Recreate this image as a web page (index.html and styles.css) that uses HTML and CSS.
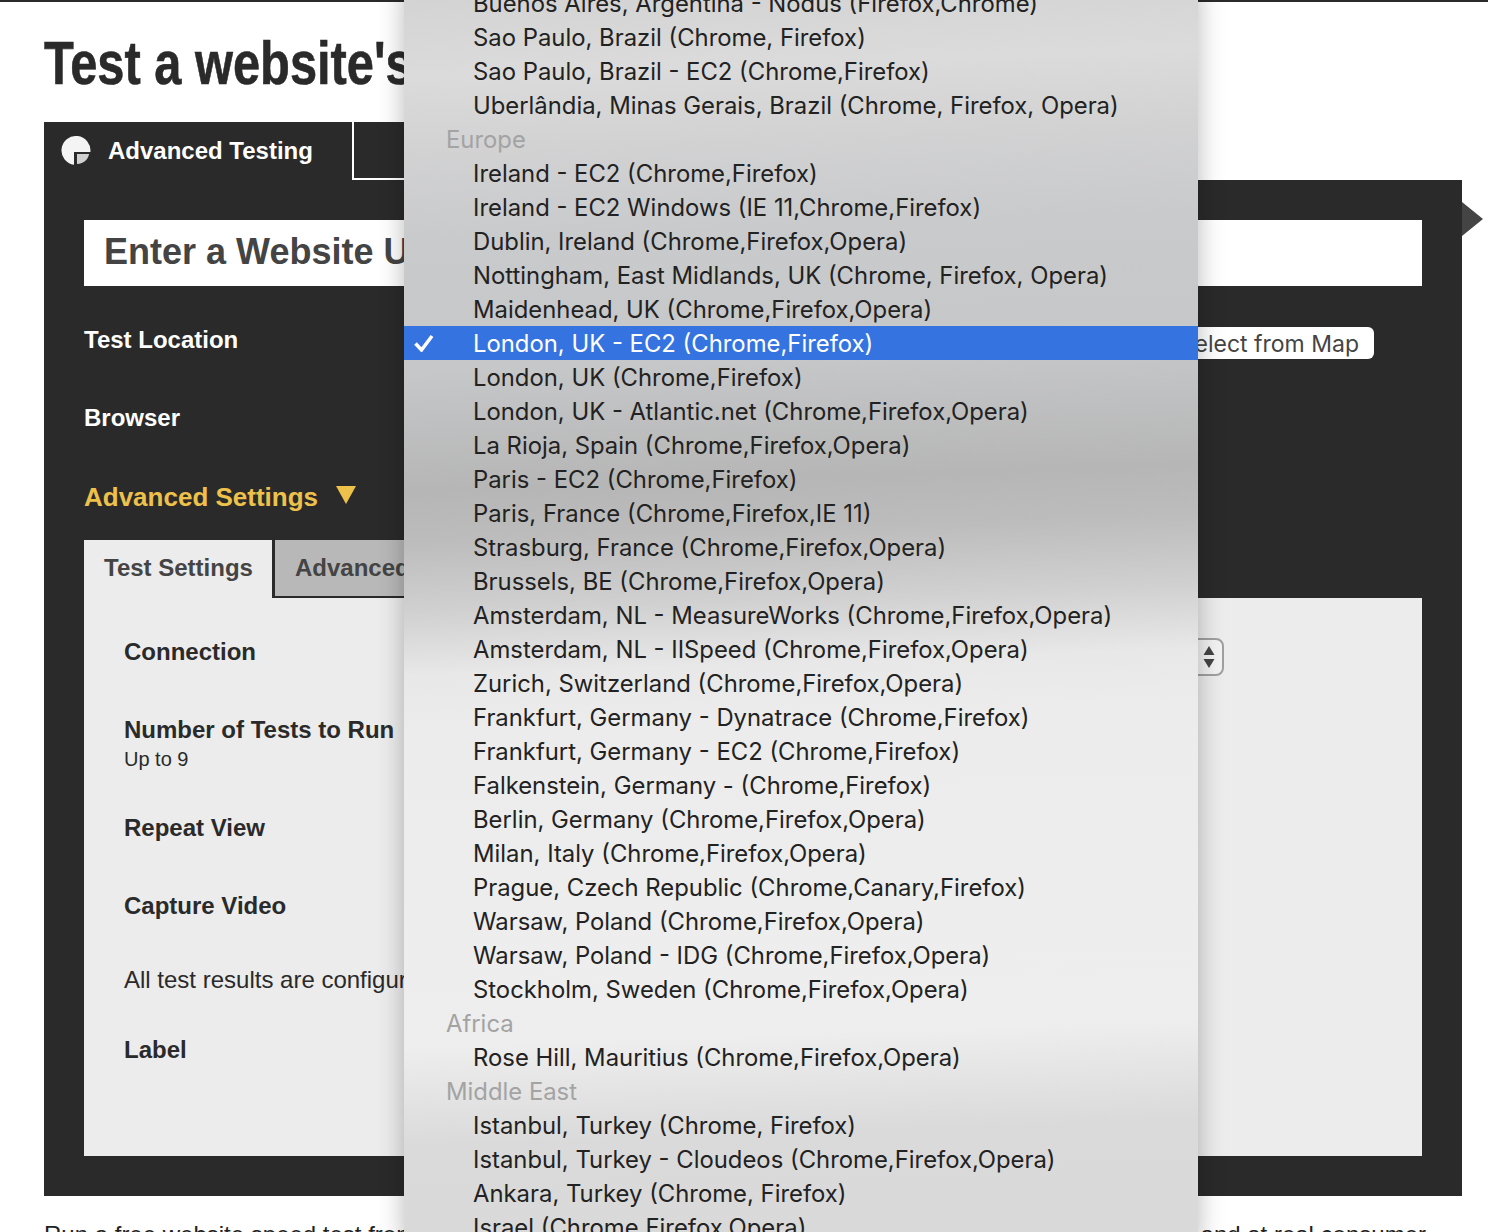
FILE: index.html
```html
<!DOCTYPE html>
<html lang="en">
<head>
  <meta charset="UTF-8" />
  <title>Test a website's performance</title>
  <link rel="stylesheet" href="styles.css">
</head>
<body>
  <main class="page">
    <h1>Test a website's performance</h1>

    <div class="tester">
      <div class="tabs">
        <div class="tab tab-active">
          <svg class="tab-icon" width="30" height="30" viewBox="0 0 30 30">
            <path d="M13 28.860A14.500 14.500 0 1 1 29.410 16H13z" fill="#f4f4f4"/>
            <path d="M16 18h12c-.5 5-5 9.500-12 10z" fill="#d0d0d0"/>
          </svg>
          Advanced Testing
        </div>
        <div class="tab tab-other">Simple Testing</div>
        <div class="tab-rest"></div>
      </div>

      <div class="panel">
        <div class="url-box">Enter a Website URL</div>

        <div class="field field-location">
          <span class="field-label">Test Location</span>
          <button class="map-btn" type="button">Select from Map</button>
        </div>
        <div class="field">
          <span class="field-label">Browser</span>
        </div>
        <div class="adv-toggle">
          Advanced Settings
          <svg width="20" height="18" viewBox="0 0 20 18"><path d="M0 0h20L10 18z" fill="#eec14a"/></svg>
        </div>

        <div class="sub-tabs">
          <div class="sub-tab sub-tab-active">Test Settings</div>
          <div class="sub-tab">Advanced</div>
        </div>
        <div class="settings">
          <div class="setting setting-connection">
            <span class="field-label">Connection</span>
            <div class="stepper">
              <svg width="12" height="22" viewBox="0 0 12 22">
                <path d="M6 0l5.500 9H.5zM.5 13h11L6 22z" fill="#444"/>
              </svg>
            </div>
          </div>
          <div class="setting setting-runs">
            <span class="field-label">Number of Tests to Run</span>
            <span class="field-hint">Up to 9</span>
          </div>
          <div class="setting"><span class="field-label">Repeat View</span></div>
          <div class="setting"><span class="field-label">Capture Video</span></div>
          <div class="setting setting-note">All test results are configured to be public</div>
          <div class="setting"><span class="field-label">Label</span></div>
        </div>
      </div>
      <div class="next-arrow"></div>
    </div>

    <p class="intro">
      <span>Run a free website speed test from</span>
      <span>and at real consumer</span>
    </p>
  </main>

  <ul class="menu">
    <li>Buenos Aires, Argentina - Nodus (Firefox,Chrome)</li>
    <li>Sao Paulo, Brazil (Chrome, Firefox)</li>
    <li>Sao Paulo, Brazil - EC2 (Chrome,Firefox)</li>
    <li>Uberlândia, Minas Gerais, Brazil (Chrome, Firefox, Opera)</li>
    <li class="menu-group">Europe</li>
    <li>Ireland - EC2 (Chrome,Firefox)</li>
    <li>Ireland - EC2 Windows (IE 11,Chrome,Firefox)</li>
    <li>Dublin, Ireland (Chrome,Firefox,Opera)</li>
    <li>Nottingham, East Midlands, UK (Chrome, Firefox, Opera)</li>
    <li>Maidenhead, UK (Chrome,Firefox,Opera)</li>
    <li class="menu-selected">
      <svg class="menu-check" width="20" height="18" viewBox="0 0 20 18">
        <path d="M1.500 9.500l6 6.500L18 2" fill="none" stroke="#fff" stroke-width="3.500"/>
      </svg>
      London, UK - EC2 (Chrome,Firefox)
    </li>
    <li>London, UK (Chrome,Firefox)</li>
    <li>London, UK - Atlantic.net (Chrome,Firefox,Opera)</li>
    <li>La Rioja, Spain (Chrome,Firefox,Opera)</li>
    <li>Paris - EC2 (Chrome,Firefox)</li>
    <li>Paris, France (Chrome,Firefox,IE 11)</li>
    <li>Strasburg, France (Chrome,Firefox,Opera)</li>
    <li>Brussels, BE (Chrome,Firefox,Opera)</li>
    <li>Amsterdam, NL - MeasureWorks (Chrome,Firefox,Opera)</li>
    <li>Amsterdam, NL - IISpeed (Chrome,Firefox,Opera)</li>
    <li>Zurich, Switzerland (Chrome,Firefox,Opera)</li>
    <li>Frankfurt, Germany - Dynatrace (Chrome,Firefox)</li>
    <li>Frankfurt, Germany - EC2 (Chrome,Firefox)</li>
    <li>Falkenstein, Germany - (Chrome,Firefox)</li>
    <li>Berlin, Germany (Chrome,Firefox,Opera)</li>
    <li>Milan, Italy (Chrome,Firefox,Opera)</li>
    <li>Prague, Czech Republic (Chrome,Canary,Firefox)</li>
    <li>Warsaw, Poland (Chrome,Firefox,Opera)</li>
    <li>Warsaw, Poland - IDG (Chrome,Firefox,Opera)</li>
    <li>Stockholm, Sweden (Chrome,Firefox,Opera)</li>
    <li class="menu-group">Africa</li>
    <li>Rose Hill, Mauritius (Chrome,Firefox,Opera)</li>
    <li class="menu-group">Middle East</li>
    <li>Istanbul, Turkey (Chrome, Firefox)</li>
    <li>Istanbul, Turkey - Cloudeos (Chrome,Firefox,Opera)</li>
    <li>Ankara, Turkey (Chrome, Firefox)</li>
    <li>Israel (Chrome,Firefox,Opera)</li>
  </ul>
</body>
</html>
```

FILE: styles.css
```css
html, body {
  height: 1232px;
  overflow: hidden;
}
body {
  margin: 0;
  position: relative;
  background: white;
  color: #2a2a2a;
  font-family: "Liberation Sans", Arial, sans-serif;
}
.page {
  border-top: 2px solid #2a2a2a;
  padding: 0 26px 0 44px;
}
h1 {
  margin: 0;
  height: 120px;
  box-sizing: border-box;
  padding-top: 29px;
  font-size: 61px;
  line-height: 64px;
  color: #2a2a2a;
  white-space: nowrap;
  transform: scaleX(0.8);
  transform-origin: left;
  -webkit-text-stroke: 0.6px #2a2a2a;
}
.tester {
  position: relative;
}
.tabs {
  display: flex;
  height: 58px;
}
.tab {
  display: flex;
  align-items: center;
  box-sizing: border-box;
  color: white;
  font-size: 24px;
  font-weight: bold;
}
.tab-active {
  width: 308px;
  padding-left: 17px;
  background: #2a2a2a;
}
.tab-icon {
  margin-right: 17px;
}
.tab-other {
  width: 300px;
  padding-left: 70px;
  background: #2a2a2a;
  border: 2px solid white;
  border-top: 0;
}
.tab-rest {
  flex: 1;
}
.panel {
  height: 1016px;
  box-sizing: border-box;
  padding: 40px 40px 0;
  background: #2a2a2a;
}
.url-box {
  height: 66px;
  line-height: 64px;
  padding-left: 20px;
  background: white;
  color: #444;
  font-size: 36px;
  font-weight: bold;
}
.field {
  display: flex;
  align-items: center;
  height: 78px;
  color: white;
}
.field-location {
  margin-top: 15px;
  height: 78px;
  justify-content: space-between;
  padding-right: 48px;
}
.field-label {
  font-size: 24px;
  font-weight: bold;
}
.map-btn {
  height: 32px;
  width: 280px;
  margin-top: 6px;
  padding: 2px 15px 0 0;
  border: 0;
  border-radius: 6px;
  background: white;
  color: #444;
  font-family: Inter, sans-serif;
  font-size: 23px;
  text-align: right;
}
.adv-toggle {
  display: flex;
  align-items: center;
  gap: 18px;
  height: 40px;
  margin-top: 20px;
  color: #eec14a;
  font-size: 26px;
  font-weight: bold;
}
.adv-toggle svg {
  margin-bottom: 4px;
}
.sub-tabs {
  display: flex;
  height: 58px;
  margin-top: 23px;
}
.sub-tab {
  width: 308px;
  box-sizing: border-box;
  padding: 14px 0 0 20px;
  background: #b8b8b8;
  color: #444;
  font-size: 24px;
  font-weight: bold;
  border-left: 2px solid #2a2a2a;
  border-bottom: 2px solid #2a2a2a;
}
.sub-tab-active {
  width: 188px;
  background: #ececec;
  border: 0;
}
.sub-tab + .sub-tab {
  margin-left: 1px;
}
.settings {
  height: 558px;
  box-sizing: border-box;
  padding: 15px 40px 0;
  background: #ececec;
}
.setting {
  position: relative;
  display: flex;
  flex-direction: column;
  justify-content: center;
  height: 78px;
  color: #2a2a2a;
}
.setting-connection {
  flex-direction: row;
  justify-content: space-between;
  align-items: center;
  padding-right: 158px;
}
.setting-runs {
  height: 98px;
  box-sizing: border-box;
  padding-top: 6px;
}
.setting-note {
  height: 66px;
  box-sizing: border-box;
  padding-top: 4px;
  font-size: 24px;
}
.field-hint {
  margin-top: 4px;
  font-size: 20px;
}
.stepper {
  display: flex;
  align-items: center;
  justify-content: center;
  width: 60px;
  height: 38px;
  margin-top: 9px;
  padding-left: 29px;
  box-sizing: border-box;
  border: 2px solid #a0a0a0;
  border-radius: 8px;
  background: #f2f2f2;
}
.next-arrow {
  position: absolute;
  top: 80px;
  right: -21px;
  width: 0;
  height: 0;
  border-left: 21px solid #444;
  border-top: 17px solid transparent;
  border-bottom: 17px solid transparent;
}
.intro {
  display: flex;
  justify-content: space-between;
  margin: 25px 36px 0 0;
  font-size: 24px;
  color: #222;
}
.menu {
  position: absolute;
  top: -14px;
  left: 404px;
  width: 794px;
  margin: 0;
  padding: 0;
  list-style: none;
  background: linear-gradient(178deg, #d2d2d2 0, #dbdbdb 90px, #d2d2d3 165px, #c9cacc 255px, #c6c7c9 385px, #b6b6b6 505px, #bcbcbc 555px, #d0d0d0 625px, #e8e8e8 690px, #ececec 745px, #eeeeee 1060px, #dadada 1160px, #d9d9d9 100%);
  box-shadow: 0 0 24px rgba(0, 0, 0, 0.28);
  color: #222;
  font-family: Inter, sans-serif;
  font-size: 23.85px;
}
.menu li {
  position: relative;
  height: 34px;
  line-height: 36px;
  padding-left: 69px;
  white-space: nowrap;
}
.menu .menu-group {
  padding-left: 42px;
  color: #a3a3a3;
}
.menu .menu-selected {
  background: #3574e0;
  color: white;
}
.menu-check {
  position: absolute;
  top: 8px;
  left: 10px;
}
```
